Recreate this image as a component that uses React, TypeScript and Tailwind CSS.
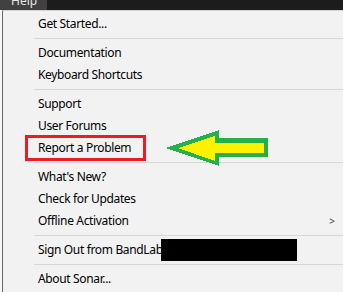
import { Fragment } from "react"

type Entry = { label: string; sub?: boolean } | "sep"

const entries: Entry[] = [
  { label: "Get Started..." },
  "sep",
  { label: "Documentation" },
  { label: "Keyboard Shortcuts" },
  "sep",
  { label: "Support" },
  { label: "User Forums" },
  { label: "Report a Problem" },
  "sep",
  { label: "What's New?" },
  { label: "Check for Updates" },
  { label: "Offline Activation", sub: true },
  "sep",
  { label: "Sign Out from BandLab" },
  "sep",
  { label: "About Sonar..." },
]

export default function App() {
  return (
    <div
      className="relative w-[343px] h-[292px] overflow-hidden bg-[#f2f2f2] text-black"
      style={{ fontFamily: '"Noto Sans", "Liberation Sans", sans-serif' }}
    >
      {/* Barre de menu (coupée en haut) */}
      <div className="flex h-[10px] bg-[#1c1c1c]">
        <div className="w-[47px] h-full overflow-hidden bg-[#414141]">
          <div className="-mt-[7px] pl-[11px] text-[12px] leading-[16px] text-[#e6e6e6]">Help</div>
        </div>
      </div>

      <div className="flex h-[282px]">
        <div className="w-[2px] bg-[#f7f7f7]" />
        <div className="flex-1 border-l border-t border-l-[#6a6a6a] border-t-[#d4d4d4] pt-[2px]">
          {entries.map((e, i) =>
            e === "sep" ? (
              <div key={i} className="flex h-[7px] items-center pl-[31px]">
                <div className="h-px flex-1 bg-[#d7d7d7]" />
              </div>
            ) : (
              <Fragment key={i}>
                <div className="flex h-[22px] items-center pl-[35px] pr-[8px] text-[12px]">
                  <span className="flex-1 tracking-[-0.35px]">{e.label}</span>
                  {e.sub && <span className="text-[10px] text-[#444]">&gt;</span>}
                </div>
              </Fragment>
            )
          )}
        </div>
      </div>

      {/* Annotations par-dessus */}
      <div className="absolute left-[25px] top-[135px] w-[121px] h-[26px] border-[3px] border-[#ed1c24]" />
      <div className="absolute left-[161px] top-[239px] w-[136px] h-[22px] bg-black" />
      <svg className="absolute left-0 top-0" width="343" height="292" shapeRendering="crispEdges">
        <polygon points="166,148 219,130 219,138 268,138 268,157 219,157 219,166" fill="#22b14c" />
        <polygon points="178,148 215,136 215,143 264,143 264,153 215,153 215,161" fill="#fff200" />
      </svg>
    </div>
  )
}
